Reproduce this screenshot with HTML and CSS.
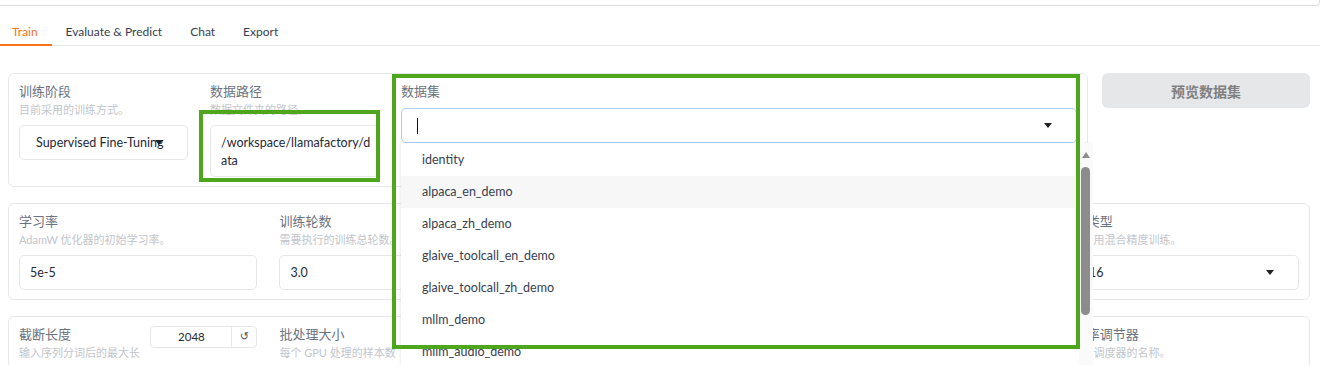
FILE: index.html
```html
<!DOCTYPE html>
<html lang="zh-CN">
<head>
<meta charset="utf-8">
<title>LLaMA Factory - Train</title>
<link rel="stylesheet" href="styles.css">
</head>
<body>
<div class="app">
  <div class="prev-block"></div>

  <div class="tabs">
    <button class="tab active">Train</button>
    <button class="tab">Evaluate &amp; Predict</button>
    <button class="tab">Chat</button>
    <button class="tab">Export</button>
  </div>

  <div class="tab-body">
    <div class="row row-top">
      <div class="panel panel-data">
        <div class="field f-stage">
          <div class="label">训练阶段</div>
          <div class="info">目前采用的训练方式。</div>
          <div class="select"><span class="sel-text">Supervised Fine-Tuning</span><span class="caret"></span></div>
        </div>
        <div class="field f-path">
          <div class="label">数据路径</div>
          <div class="info">数据文件夹的路径。</div>
          <div class="textarea">/workspace/llamafactory/data</div>
        </div>
        <div class="field f-dataset">
          <div class="label">数据集</div>
          <div class="combo-wrap">
            <div class="combo"><span class="cursor"></span><span class="sel-text"></span><span class="caret"></span></div>
            <div class="options">
              <ul class="opt-list">
                <li class="opt">identity</li>
                <li class="opt hover">alpaca_en_demo</li>
                <li class="opt">alpaca_zh_demo</li>
                <li class="opt">glaive_toolcall_en_demo</li>
                <li class="opt">glaive_toolcall_zh_demo</li>
                <li class="opt">mllm_demo</li>
                <li class="opt">mllm_audio_demo</li>
                <li class="opt">mllm_video_demo</li>
              </ul>
              <div class="vscroll">
                <span class="vs-up"></span>
                <span class="vs-thumb"></span>
              </div>
            </div>
          </div>
        </div>
      </div>
      <div class="preview-col">
        <button class="btn-preview">预览数据集</button>
      </div>
    </div>

    <div class="row">
      <div class="panel panel-full">
        <div class="field">
          <div class="label">学习率</div>
          <div class="info">AdamW 优化器的初始学习率。</div>
          <div class="input">5e-5</div>
        </div>
        <div class="field">
          <div class="label">训练轮数</div>
          <div class="info">需要执行的训练总轮数。</div>
          <div class="input">3.0</div>
        </div>
        <div class="field">
          <div class="label">最大梯度范数</div>
          <div class="info">用于梯度裁剪的范数。</div>
          <div class="input">1.0</div>
        </div>
        <div class="field">
          <div class="label">最大样本数</div>
          <div class="info">每个数据集的最大样本数。</div>
          <div class="input">100000</div>
        </div>
        <div class="field">
          <div class="label">计算类型</div>
          <div class="info">是否使用混合精度训练。</div>
          <div class="select"><span class="sel-text">bf16</span><span class="caret"></span></div>
        </div>
      </div>
    </div>

    <div class="row row-third">
      <div class="panel panel-full">
        <div class="field">
          <div class="slider-head">
            <div class="slider-text"><div class="label">截断长度</div><div class="info">输入序列分词后的最大长度。</div></div>
            <div class="num"><span class="num-val">2048</span><span class="num-reset">↺</span></div>
          </div>
        </div>
        <div class="field">
          <div class="slider-head">
            <div class="slider-text"><div class="label">批处理大小</div><div class="info">每个 GPU 处理的样本数量。</div></div>
            <div class="num"><span class="num-val">2</span><span class="num-reset">↺</span></div>
          </div>
        </div>
        <div class="field">
          <div class="slider-head">
            <div class="slider-text"><div class="label">梯度累积</div><div class="info">梯度累积的步数。</div></div>
            <div class="num"><span class="num-val">8</span><span class="num-reset">↺</span></div>
          </div>
        </div>
        <div class="field">
          <div class="slider-head">
            <div class="slider-text"><div class="label">验证集比例</div><div class="info">验证集占全部样本的百分比。</div></div>
            <div class="num"><span class="num-val">0</span><span class="num-reset">↺</span></div>
          </div>
        </div>
        <div class="field">
          <div class="label">学习率调节器</div>
          <div class="info">学习率调度器的名称。</div>
          <div class="select"><span class="sel-text">cosine</span><span class="caret"></span></div>
        </div>
      </div>
    </div>
  </div>

  <div class="mark mark-path"></div>
  <div class="mark mark-dataset"></div>
</div>
</body>
</html>
```

FILE: styles.css
```css
* { box-sizing: border-box; }

html, body {
  margin: 0;
  padding: 0;
  overflow: hidden;
  background: #ffffff;
}

body {
  font-family: "Lato", "Noto Sans CJK SC", sans-serif;
  font-size: 12.5px;
  color: #1f2937;
}

.app {
  width: 1320px;
  position: relative;
}

.prev-block {
  height: 6px;
  border-right: 1px solid #e0e0e0;
  border-bottom: 1px solid #e0e0e0;
  border-radius: 0 0 4px 0;
}

/* tabs */
.tabs {
  display: flex;
  margin-top: 13px;
  border-bottom: 1px solid #e5e7eb;
}

.tab {
  font: inherit;
  font-size: 12px;
  background: none;
  border: none;
  border-bottom: 2px solid transparent;
  margin: 0 0 -1px 0;
  padding: 0 14px;
  height: 27px;
  line-height: 24px;
  color: #374151;
  cursor: pointer;
}

.tab.active {
  color: #f97316;
  border-bottom-color: #f97316;
  padding-left: 12px;
}

/* body */
.tab-body {
  padding: 27px 10px 0 8px;
}

.row {
  display: flex;
  gap: 14px;
  margin-bottom: 16px;
}

.row-third { margin-bottom: 0; }

.panel {
  border: 1px solid #e5e7eb;
  border-radius: 6px;
  padding: 8px 10px 9px 10px;
  display: flex;
  background: #ffffff;
}

.panel-data {
  flex: 1;
  gap: 22px;
  align-items: flex-start;
}

.panel-full {
  flex: 1;
  gap: 22px;
}

.field {
  flex: 1 1 0;
  min-width: 0;
}

.f-dataset { flex: 4 1 0; }

.label {
  font-size: 13px;
  line-height: 18px;
  color: #6b7280;
  white-space: nowrap;
}

.info {
  margin-top: 1px;
  font-size: 11px;
  line-height: 18px;
  color: #c2c5cb;
}

.input,
.select {
  margin-top: 6px;
  height: 35px;
  border: 1px solid #e5e7eb;
  border-radius: 5px;
  display: flex;
  align-items: center;
  font-size: 12.5px;
  color: #1f2937;
}

.input { padding: 0 10px; }

.select { padding: 0 24px 0 16px; }

.sel-text {
  flex: 1;
  min-width: 0;
  white-space: nowrap;
}

.caret {
  width: 0;
  height: 0;
  border-left: 4px solid transparent;
  border-right: 4px solid transparent;
  border-top: 5px solid #222222;
  flex: none;
}

.textarea {
  margin-top: 6px;
  height: 52px;
  border: 1px solid #e5e7eb;
  border-radius: 5px;
  padding: 8px 5px 8px 10px;
  font-size: 12.5px;
  line-height: 18px;
  word-break: break-all;
  color: #1f2937;
}

/* dataset combo */
.combo-wrap {
  position: relative;
  margin-top: 8px;
}

.combo {
  height: 35px;
  border: 1px solid #a9cdf6;
  border-radius: 5px;
  display: flex;
  align-items: center;
  padding: 0 24px 0 15px;
}

.cursor {
  width: 1px;
  height: 16px;
  background: #111111;
  flex: none;
}

.options {
  position: absolute;
  top: 100%;
  left: 0;
  width: calc(100% + 16px);
  height: 230px;
  display: flex;
  background: #ffffff;
  box-shadow: -1px 0 2px rgba(0, 0, 0, 0.08);
  z-index: 5;
}

.opt-list {
  list-style: none;
  margin: 0;
  padding: 1px 0 0 0;
  flex: 1;
}

.opt {
  height: 32px;
  line-height: 32px;
  padding-left: 21px;
  font-size: 12.5px;
  color: #374151;
}

.opt.hover { background: #f7f7f8; }

.vscroll {
  width: 14px;
  background: #fafafa;
  display: flex;
  flex-direction: column;
  align-items: flex-start;
  padding: 9px 0 0 2px;
}

.vs-up {
  width: 0;
  height: 0;
  margin-left: 0.5px;
  border-left: 4px solid transparent;
  border-right: 4px solid transparent;
  border-bottom: 6px solid #8e8e8e;
}

.vs-thumb {
  margin-top: 9px;
  width: 9px;
  height: 148px;
  border-radius: 5px;
  background: #8c8c8c;
}

/* preview button */
.preview-col {
  width: 208px;
  flex: none;
}

.btn-preview {
  width: 100%;
  height: 35px;
  border: none;
  border-radius: 6px;
  background: #e6e7e9;
  color: #7f7f7f;
  font-family: "Lato", "Noto Sans CJK SC", sans-serif;
  font-size: 14px;
  font-weight: 600;
}

/* slider rows */
.slider-head {
  display: flex;
  gap: 8px;
  align-items: flex-start;
}

.slider-text {
  flex: 1;
  min-width: 0;
}

.num {
  width: 107px;
  height: 22px;
  margin-top: 1px;
  flex: none;
  display: flex;
  border: 1px solid #e5e7eb;
  border-radius: 4px;
  font-size: 11.5px;
  color: #1f2937;
}

.num-val {
  flex: 1;
  text-align: center;
  line-height: 20px;
}

.num-reset {
  width: 25px;
  border-left: 1px solid #e5e7eb;
  text-align: center;
  line-height: 20px;
  color: #555555;
  font-family: "DejaVu Sans", sans-serif;
  font-size: 11px;
}

/* annotation boxes */
.mark {
  position: absolute;
  border: 4px solid #4da61c;
  z-index: 10;
}

.mark-path {
  left: 199px;
  top: 110px;
  width: 181px;
  height: 72px;
}

.mark-dataset {
  left: 392px;
  top: 74px;
  width: 688px;
  height: 275px;
}
```
